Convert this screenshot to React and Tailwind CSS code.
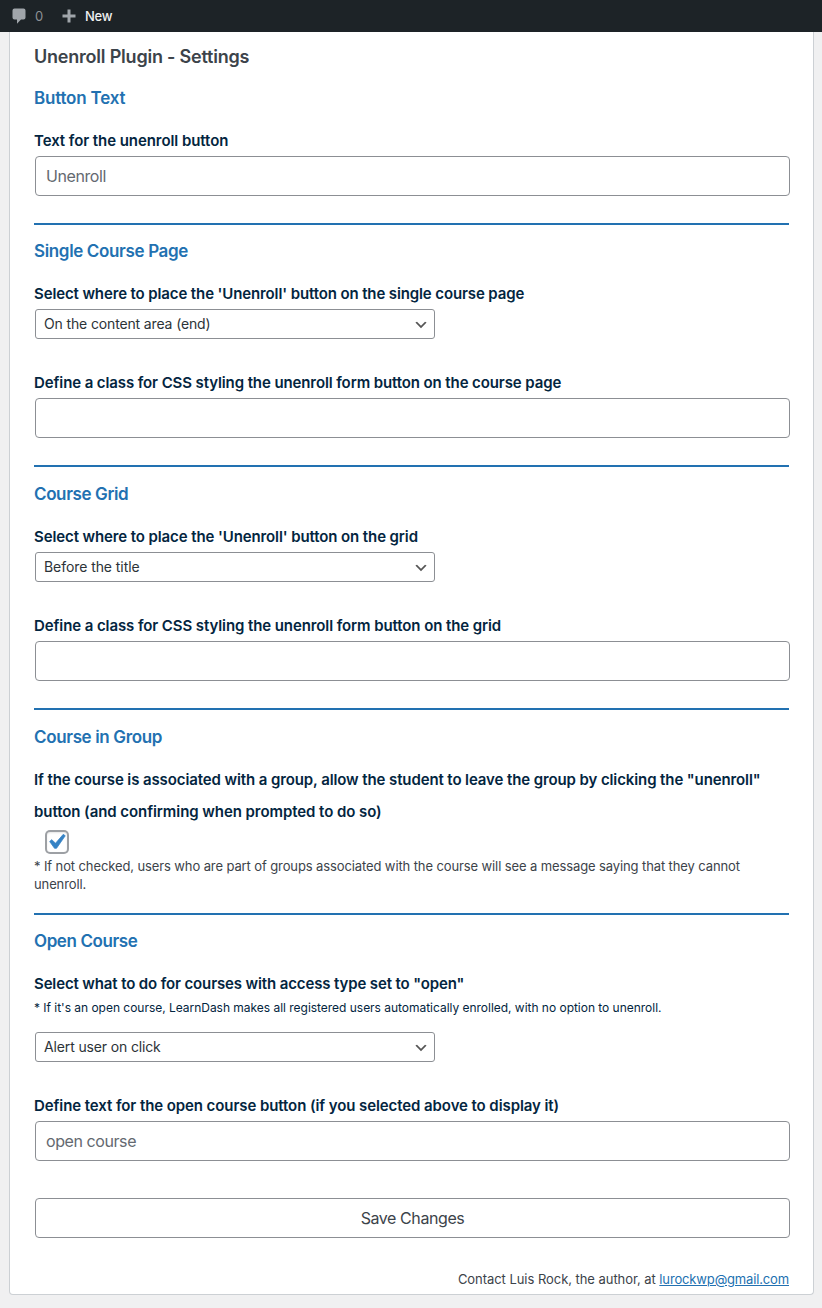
function Heading({ children, className = 'mt-[14px] tracking-[-0.35px]' }) {
  return <h2 className={`h-6 text-[17px] leading-6 font-semibold whitespace-nowrap text-[#2271b1] ${className}`}>{children}</h2>;
}

function Label({ children, className = 'mt-[15px] tracking-[-0.105px]' }) {
  return <label className={`-mb-px block text-[15px] leading-8 font-semibold whitespace-nowrap text-[#032540] ${className}`}>{children}</label>;
}

function TextInput({ placeholder }) {
  return (
    <input
      type="text"
      placeholder={placeholder}
      className="ml-px block h-10 w-full rounded-[4px] border border-[#8c8f94] bg-white px-[10px] text-[16px] tracking-[-0.42px] placeholder:text-[#646970]"
    />
  );
}

function Select({ children, className = 'tracking-[-0.14px]' }) {
  return (
    <button
      type="button"
      className={`ml-px flex h-[30px] w-[400px] items-center justify-between rounded-[3px] border border-[#8c8f94] bg-white pr-[5px] pl-2 text-[14px] text-[#2c3338] ${className}`}
    >
      <span className="pb-0.5">{children}</span>
      <svg viewBox="0 0 20 20" className="mt-px size-4" fill="#555">
        <path d="M5 6l5 5 5-5 2 1-7 7-7-7 2-1z" />
      </svg>
    </button>
  );
}

function Rule({ className = 'mt-[27px]' }) {
  return <div className={`h-0.5 bg-[#2271b1] ${className}`} />;
}

export default function App() {
  return (
    <div className="h-[1308px] w-[822px] overflow-hidden bg-[#f0f0f1] font-['Inter','Liberation_Sans',sans-serif]">
      <header className="flex h-8 items-center bg-[#1d2327] text-[13px] leading-8">
        <svg viewBox="0 0 14 16" className="ml-[12px] h-4 w-[14px]" fill="#a0a5aa">
          <path d="M2.5 0.5h9A2 2 0 0 1 13.5 2.5v7a2 2 0 0 1-2 2H9l-4 4.3V11.5H2.5a2 2 0 0 1-2-2V2.5a2 2 0 0 1 2-2z" />
        </svg>
        <span className="ml-[9px] w-[8px] text-[#8d9196]">0</span>
        <svg viewBox="0 0 14 14" className="ml-[19px] size-[14px]" fill="#a0a5aa">
          <path d="M5.5 0.5h3v5h5v3h-5v5h-3v-5h-5v-3h5z" />
        </svg>
        <span className="ml-[9px] font-medium tracking-[-0.3px] text-[#f0f0f1]">New</span>
      </header>

      <main className="ml-[9px] h-[1263px] w-[805px] rounded-b-[4px] border border-t-0 border-[#ccd0d4] bg-white px-6 pt-3">
        <h1 className="h-[26px] text-[18px] leading-[26px] font-semibold tracking-[-0.21px] whitespace-nowrap text-[#3c434a]">
          Unenroll Plugin - Settings
        </h1>

        <Heading className="mt-4 tracking-[-0.2px]">Button Text</Heading>
        <Label className="mt-[15px] tracking-[-0.07px]">Text for the unenroll button</Label>
        <TextInput placeholder="Unenroll" />
        <Rule />

        <Heading>Single Course Page</Heading>
        <Label className="mt-[15px] tracking-[-0.12px]">Select where to place the 'Unenroll' button on the single course page</Label>
        <Select>On the content area (end)</Select>
        <Label className="mt-[28px] tracking-[-0.105px]">Define a class for CSS styling the unenroll form button on the course page</Label>
        <TextInput />
        <Rule />

        <Heading className="mt-[15px] tracking-[-0.38px]">Course Grid</Heading>
        <Label>Select where to place the 'Unenroll' button on the grid</Label>
        <Select className="tracking-[-0.07px]">Before the title</Select>
        <Label className="mt-[28px] tracking-[-0.095px]">Define a class for CSS styling the unenroll form button on the grid</Label>
        <TextInput />
        <Rule />

        <Heading className="mt-[15px] tracking-[-0.35px]">Course in Group</Heading>
        <Label>
          If the course is associated with a group, allow the student to leave the group by clicking the "unenroll"
          <br />
          <span className="tracking-[-0.07px]">button (and confirming when prompted to do so)</span>
        </Label>
        <div className="mt-[3px] ml-[11px] flex size-6 items-center justify-center rounded-[5px] border-2 border-[#8c8f94]/85 bg-white shadow-[inset_0_1px_2px_rgba(0,0,0,0.1)]">
          <svg viewBox="0 0 20 20" className="mr-[3px] size-[30px] shrink-0" fill="#3582c4">
            <path d="M14.83 4.89l1.34.94-5.81 8.38H9.02L5.78 9.67l1.34-1.25 2.57 2.4z" stroke="#3582c4" strokeWidth="0.5" />
          </svg>
        </div>
        <p className="mt-[3px] text-[13px] leading-[18px] tracking-[-0.11px] whitespace-nowrap text-[#3c434a]">
          * If not checked, users who are part of groups associated with the course will see a message saying that they cannot
          <br />
          unenroll.
        </p>
        <Rule className="mt-[20px]" />

        <Heading className="mt-[14px] tracking-[-0.4px]">Open Course</Heading>
        <Label className="mt-[15px] tracking-[-0.13px]">Select what to do for courses with access type set to "open"</Label>
        <p className="text-[12px] leading-[18px] tracking-[-0.025px] whitespace-nowrap text-[#032540]">
          * If it's an open course, LearnDash makes all registered users automatically enrolled, with no option to unenroll.
        </p>
        <Select className="mt-[15px] tracking-[-0.14px]">Alert user on click</Select>
        <Label className="mt-[28px] tracking-[-0.085px]">Define text for the open course button (if you selected above to display it)</Label>
        <TextInput placeholder="open course" />

        <button
          type="button"
          className="mt-[37px] ml-px block h-10 w-full rounded-[4px] border border-[#8c8f94] bg-white text-[16px] tracking-[-0.42px] text-[#3c434a]"
        >
          Save Changes
        </button>
        <footer className="mt-[32px] text-right text-[13px] leading-[18px] tracking-[-0.05px] text-[#3c434a]">
          Contact Luis Rock, the author, at <a className="tracking-[-0.15px] text-[#2271b1] underline">lurockwp@gmail.com</a>
        </footer>
      </main>
    </div>
  );
}
